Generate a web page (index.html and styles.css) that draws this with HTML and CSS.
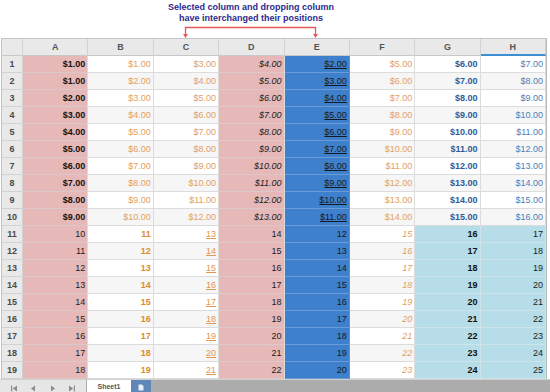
FILE: index.html
```html
<!DOCTYPE html>
<html>
<head>
  <title>Column drag and drop</title>
  <link rel="stylesheet" href="styles.css">
</head>
<body>
  <div class="note">
    Selected column and dropping column<br>
    have interchanged their positions
  </div>
  <svg class="arrow" width="550" height="14" viewBox="0 0 550 14">
    <path d="M185.5 12 V3.5 H315.5 V12" fill="none" stroke="#e45b5b" stroke-width="1.3"/>
    <path d="M183 10 L185.5 14 L188 10 Z" fill="#e45b5b"/>
    <path d="M313 10 L315.5 14 L318 10 Z" fill="#e45b5b"/>
  </svg>

  <div class="wrap">
    <table class="sheet">
      <colgroup>
        <col class="rhcol">
        <col><col><col><col><col><col><col><col>
      </colgroup>
      <thead>
        <tr>
          <th class="corner"></th>
          <th>A</th><th>B</th><th>C</th><th>D</th><th>E</th><th>F</th><th>G</th><th class="active">H</th>
        </tr>
      </thead>
      <tbody class="money">
        <tr><th>1</th><td>$1.00</td><td>$1.00</td><td>$3.00</td><td>$4.00</td><td>$2.00</td><td>$5.00</td><td>$6.00</td><td>$7.00</td></tr>
        <tr><th>2</th><td>$1.00</td><td>$2.00</td><td>$4.00</td><td>$5.00</td><td>$3.00</td><td>$6.00</td><td>$7.00</td><td>$8.00</td></tr>
        <tr><th>3</th><td>$2.00</td><td>$3.00</td><td>$5.00</td><td>$6.00</td><td>$4.00</td><td>$7.00</td><td>$8.00</td><td>$9.00</td></tr>
        <tr><th>4</th><td>$3.00</td><td>$4.00</td><td>$6.00</td><td>$7.00</td><td>$5.00</td><td>$8.00</td><td>$9.00</td><td>$10.00</td></tr>
        <tr><th>5</th><td>$4.00</td><td>$5.00</td><td>$7.00</td><td>$8.00</td><td>$6.00</td><td>$9.00</td><td>$10.00</td><td>$11.00</td></tr>
        <tr><th>6</th><td>$5.00</td><td>$6.00</td><td>$8.00</td><td>$9.00</td><td>$7.00</td><td>$10.00</td><td>$11.00</td><td>$12.00</td></tr>
        <tr><th>7</th><td>$6.00</td><td>$7.00</td><td>$9.00</td><td>$10.00</td><td>$8.00</td><td>$11.00</td><td>$12.00</td><td>$13.00</td></tr>
        <tr><th>8</th><td>$7.00</td><td>$8.00</td><td>$10.00</td><td>$11.00</td><td>$9.00</td><td>$12.00</td><td>$13.00</td><td>$14.00</td></tr>
        <tr><th>9</th><td>$8.00</td><td>$9.00</td><td>$11.00</td><td>$12.00</td><td>$10.00</td><td>$13.00</td><td>$14.00</td><td>$15.00</td></tr>
        <tr><th>10</th><td>$9.00</td><td>$10.00</td><td>$12.00</td><td>$13.00</td><td>$11.00</td><td>$14.00</td><td>$15.00</td><td>$16.00</td></tr>
      </tbody>
      <tbody class="plain">
        <tr><th>11</th><td>10</td><td>11</td><td>13</td><td>14</td><td>12</td><td>15</td><td>16</td><td>17</td></tr>
        <tr><th>12</th><td>11</td><td>12</td><td>14</td><td>15</td><td>13</td><td>16</td><td>17</td><td>18</td></tr>
        <tr><th>13</th><td>12</td><td>13</td><td>15</td><td>16</td><td>14</td><td>17</td><td>18</td><td>19</td></tr>
        <tr><th>14</th><td>13</td><td>14</td><td>16</td><td>17</td><td>15</td><td>18</td><td>19</td><td>20</td></tr>
        <tr><th>15</th><td>14</td><td>15</td><td>17</td><td>18</td><td>16</td><td>19</td><td>20</td><td>21</td></tr>
        <tr><th>16</th><td>15</td><td>16</td><td>18</td><td>19</td><td>17</td><td>20</td><td>21</td><td>22</td></tr>
        <tr><th>17</th><td>16</td><td>17</td><td>19</td><td>20</td><td>18</td><td>21</td><td>22</td><td>23</td></tr>
        <tr><th>18</th><td>17</td><td>18</td><td>20</td><td>21</td><td>19</td><td>22</td><td>23</td><td>24</td></tr>
        <tr><th>19</th><td>18</td><td>19</td><td>21</td><td>22</td><td>20</td><td>23</td><td>24</td><td>25</td></tr>
      </tbody>
    </table>
  </div>

  <div class="tabs">
    <div class="nav">
      <svg width="8" height="7" viewBox="0 0 8 7"><rect x="1" y="0.5" width="1.2" height="6" fill="#8c8c8c"/><path d="M7 0.5 L2.8 3.5 L7 6.5 Z" fill="#8c8c8c"/></svg>
      <svg width="8" height="7" viewBox="0 0 8 7"><path d="M6 0.5 L2 3.5 L6 6.5 Z" fill="#8c8c8c"/></svg>
      <svg width="8" height="7" viewBox="0 0 8 7"><path d="M2 0.5 L6 3.5 L2 6.5 Z" fill="#8c8c8c"/></svg>
      <svg width="8" height="7" viewBox="0 0 8 7"><path d="M1 0.5 L5.2 3.5 L1 6.5 Z" fill="#8c8c8c"/><rect x="5.8" y="0.5" width="1.2" height="6" fill="#8c8c8c"/></svg>
    </div>
    <div class="tab">Sheet1</div>
    <div class="add">
      <svg width="6" height="7" viewBox="0 0 6 7"><path d="M0.5 0.5 H4 L5.5 2 V6.5 H0.5 Z" fill="#e8eef6"/></svg>
    </div>
  </div>
</body>
</html>
```

FILE: styles.css
```css
body {
  margin: 0;
  font-family: "Liberation Sans", Arial, sans-serif;
  background: #ffffff;
}

.note {
  width: 502px;
  padding-top: 2px;
  text-align: center;
  font-size: 9px;
  font-weight: bold;
  line-height: 11px;
  color: #2d2a8e;
}

.arrow {
  display: block;
}

.wrap {
  padding-left: 1px;
}

.sheet {
  width: 546px;
  table-layout: fixed;
  border-collapse: separate;
  border-spacing: 0;
  border-top: 1px solid #c4c4c4;
  border-left: 1px solid #c4c4c4;
  border-right: 1px solid #b8b8b8;
  font-size: 9px;
}

.rhcol {
  width: 21px;
}

.sheet tr {
  height: 17px;
}

.sheet th {
  background: #e9e9e9;
  color: #4a4a4a;
  font-weight: bold;
  text-align: center;
  padding: 0;
  border-right: 1px solid #d2d2d2;
  border-bottom: 1px solid #d2d2d2;
}

.sheet thead th {
  color: #555555;
  border-bottom-color: #c8c8c8;
}

.sheet thead th.active {
  border-bottom: 2px solid #3b8fd2;
}

.sheet td {
  padding: 0 2px 0 0;
  text-align: right;
  white-space: nowrap;
  overflow: hidden;
  color: #1c1c1c;
  background: #ffffff;
  border-right: 1px solid #dcdcdc;
  border-bottom: 1px solid #dcdcdc;
}

.sheet tr:nth-child(even) td {
  background: #f6f6f6;
}

/* A and D - pink */
.sheet tr td:nth-child(2),
.sheet tr td:nth-child(5) {
  background: #e6b9b8;
  border-bottom-color: #dcc8c8;
}

/* E - selected column */
.sheet tr td:nth-child(6) {
  background: #3f80cc;
  border-right-color: #5c92d2;
  border-bottom-color: #6a9bd6;
  color: #141a24;
}

/* money rows */
.money td:nth-child(2) {
  font-weight: bold;
  color: #111111;
}

.money td:nth-child(3),
.money td:nth-child(4),
.money td:nth-child(7) {
  color: #e2a061;
}

.money td:nth-child(5) {
  font-style: italic;
}

.money td:nth-child(6) {
  text-decoration: underline;
}

.money td:nth-child(8) {
  font-weight: bold;
  color: #2b5c99;
}

.money td:nth-child(9) {
  color: #4d7eb6;
}

/* plain number rows */
.plain td:nth-child(3) {
  font-weight: bold;
  color: #e0892f;
}

.plain td:nth-child(4) {
  color: #e0974f;
  text-decoration: underline;
}

.plain td:nth-child(7) {
  font-style: italic;
  color: #e0a060;
}

.plain tr td:nth-child(8),
.plain tr td:nth-child(9) {
  background: #b7dee8;
  border-bottom-color: #cfe3ea;
  border-right-color: #cfe3ea;
}

.plain td:nth-child(8) {
  font-weight: bold;
  color: #111111;
}

.tabs {
  display: flex;
  height: 16px;
  background: #acacac;
  border-top: 1px solid #d0d0d0;
}

.nav {
  width: 86px;
  display: flex;
  align-items: center;
  justify-content: space-around;
  padding: 0 4px;
  box-sizing: border-box;
  background: #e6e6e6;
}

.tab {
  width: 44px;
  margin-left: 1px;
  background: #ffffff;
  color: #555555;
  font-size: 7px;
  font-weight: bold;
  text-align: center;
  line-height: 14px;
}

.add {
  width: 20px;
  background: #5f88b9;
  display: flex;
  align-items: center;
  justify-content: center;
  height: 14px;
}
```
